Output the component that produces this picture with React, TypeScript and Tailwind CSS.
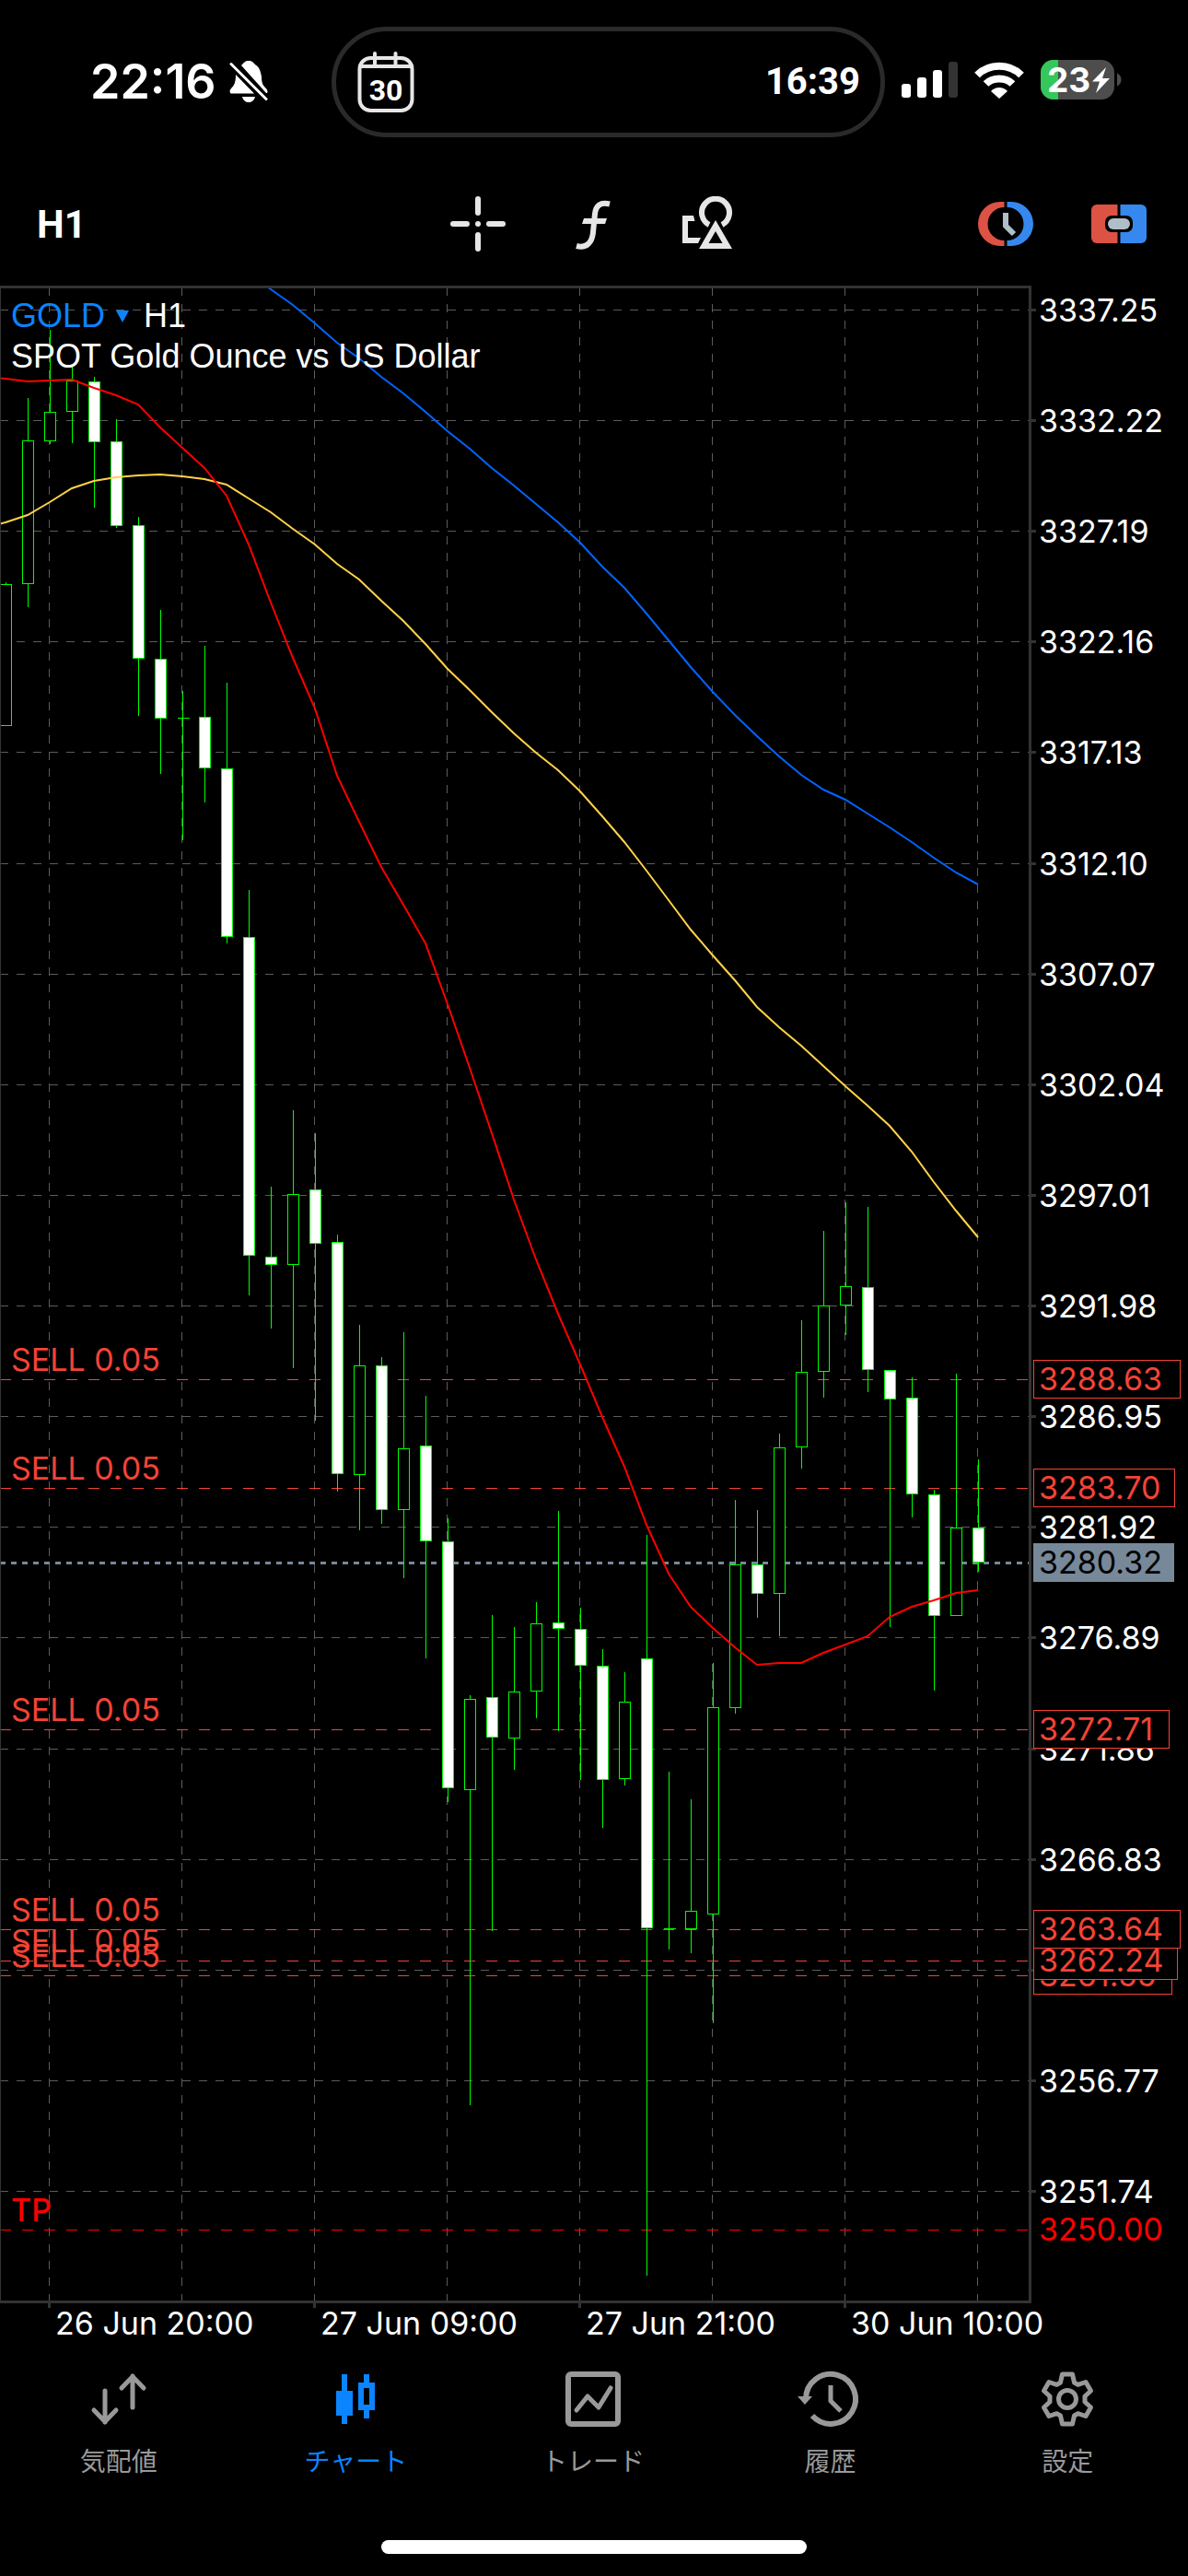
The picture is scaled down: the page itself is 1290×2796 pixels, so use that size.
import type { ReactNode } from "react";

type Candle = {
  high: number;
  top: number;
  bottom: number;
  low: number;
  down: boolean;
};

// high, body top, body bottom, low, falling (1) or rising (0)
const CANDLES: Candle[] = [
  [632, 634, 787, 787, 0],
  [432, 478, 633, 659, 0],
  [358, 447, 478, 482, 0],
  [396, 413, 446, 481, 0],
  [409, 414, 479, 551, 1],
  [455, 479, 570, 573, 1],
  [561, 570, 714, 777, 1],
  [662, 715, 779, 840, 1],
  [750, 779, 779, 912, 0],
  [701, 778, 833, 871, 1],
  [741, 834, 1016, 1024, 1],
  [966, 1017, 1362, 1406, 1],
  [1288, 1364, 1372, 1442, 1],
  [1205, 1296, 1372, 1485, 0],
  [1230, 1291, 1349, 1542, 1],
  [1340, 1348, 1599, 1619, 1],
  [1438, 1482, 1600, 1661, 0],
  [1473, 1482, 1638, 1654, 1],
  [1446, 1572, 1638, 1713, 0],
  [1515, 1569, 1672, 1800, 1],
  [1648, 1673, 1940, 1956, 1],
  [1840, 1844, 1942, 2285, 0],
  [1753, 1842, 1885, 2096, 1],
  [1766, 1836, 1886, 1921, 0],
  [1739, 1762, 1835, 1865, 0],
  [1640, 1761, 1767, 1879, 1],
  [1745, 1768, 1807, 1932, 1],
  [1790, 1808, 1931, 1984, 1],
  [1815, 1847, 1930, 1938, 0],
  [1666, 1800, 2092, 2470, 1],
  [1923, 2093, 2093, 2116, 0],
  [1953, 2074, 2093, 2120, 0],
  [1805, 1853, 2077, 2196, 0],
  [1628, 1698, 1853, 1860, 0],
  [1639, 1698, 1729, 1756, 1],
  [1556, 1571, 1729, 1776, 0],
  [1433, 1489, 1570, 1594, 0],
  [1336, 1417, 1488, 1517, 0],
  [1305, 1396, 1416, 1449, 0],
  [1310, 1397, 1486, 1511, 1],
  [1487, 1487, 1518, 1766, 1],
  [1495, 1517, 1621, 1647, 1],
  [1617, 1622, 1753, 1835, 1],
  [1491, 1658, 1753, 1753, 0],
  [1584, 1658, 1695, 1706, 1],
].map(([high, top, bottom, low, down]) => ({
  high,
  top,
  bottom,
  low,
  down: down === 1,
}));

// One value per candle, with one more before the first
const MA_FAST = [
  409, 411, 414, 413, 412, 421, 429, 439, 464, 486, 508, 538, 591, 654, 714,
  769, 842, 892, 941, 982, 1024, 1090, 1159, 1230, 1302, 1367, 1426, 1481,
  1538, 1592, 1655, 1708, 1744, 1767, 1788, 1807, 1805, 1805, 1794, 1785,
  1776, 1755, 1744, 1737, 1729, 1726,
];

const MA_MID = [
  573, 567, 559, 545, 530, 522, 518, 516, 515, 517, 520, 526, 541, 556, 574,
  591, 612, 629, 652, 674, 699, 726, 749, 773, 796, 817, 836, 859, 886, 914,
  945, 977, 1009, 1037, 1064, 1093, 1115, 1135, 1157, 1179, 1200, 1222, 1250,
  1283, 1314, 1343,
];

// Starts at candle 11, where it comes in from above the plot
const MA_SLOW = [
  297, 314, 331, 351, 372, 389, 409, 427, 447, 468, 487, 508, 527, 547, 567,
  589, 615, 638, 666, 695, 724, 751, 776, 799, 821, 841, 857, 868, 883, 898,
  914, 931, 947, 960,
];

const GRID_PRICES = [
  "3337.25",
  "3332.22",
  "3327.19",
  "3322.16",
  "3317.13",
  "3312.10",
  "3307.07",
  "3302.04",
  "3297.01",
  "3291.98",
  "3286.95",
  "3281.92",
  "3276.89",
  "3271.86",
  "3266.83",
  "3261.80",
  "3256.77",
  "3251.74",
];

const POSITIONS = [
  { price: "3261.55", y: 2144, width: 150 },
  { price: "3262.24", y: 2128, width: 156 },
  { price: "3263.64", y: 2094, width: 159 },
  { price: "3272.71", y: 1877, width: 147 },
  { price: "3283.70", y: 1615, width: 153 },
  { price: "3288.63", y: 1497, width: 159 },
];

const TIMES = [
  { x: 53, label: "26 Jun 20:00" },
  { x: 341, label: "27 Jun 09:00" },
  { x: 629, label: "27 Jun 21:00" },
  { x: 917, label: "30 Jun 10:00" },
];

const GRID_COLUMNS = [53, 197, 341, 485, 629, 773, 917, 1061];

const TOP = 313;
const BOTTOM = 2497;
const RIGHT = 1117;

const candleX = (i: number) => 6.5 + i * 24;
const gridY = (i: number) => Math.round(336 + i * 120.12) + 0.5;

function toPoints(values: number[], start: number) {
  return values.map((y, i) => `${candleX(i + start) - 0.5},${y}`).join(" ");
}

function Chart() {
  return (
    <svg
      viewBox="0 310 1290 2240"
      role="img"
      aria-label="GOLD H1"
      className="block w-full font-[Inter,'Liberation_Sans',sans-serif] text-[34px]"
    >
      <defs>
        <clipPath id="plot">
          <rect x="0" y={TOP} width={RIGHT} height={BOTTOM - TOP} />
        </clipPath>
      </defs>

      <g fill="#f44336">
        {POSITIONS.map((p) => (
          <text key={p.price} x="12" y={p.y - 9}>
            SELL 0.05
          </text>
        ))}
      </g>
      <text x="12" y="2411" fill="#ff0000" fontWeight="500">
        TP
      </text>

      <g stroke="#5c5c5c" strokeDasharray="9 9" shapeRendering="crispEdges">
        {GRID_PRICES.map((p, i) => (
          <line key={p} x1="0" y1={gridY(i)} x2={RIGHT} y2={gridY(i)} />
        ))}
        {GRID_COLUMNS.map((x) => (
          <line key={x} x1={x + 0.5} y1="312" x2={x + 0.5} y2={BOTTOM} />
        ))}
      </g>

      <g strokeDasharray="12 12" shapeRendering="crispEdges">
        {POSITIONS.map((p) => (
          <line
            key={p.price}
            x1="0"
            y1={p.y + 0.5}
            x2={RIGHT}
            y2={p.y + 0.5}
            stroke="#f44336"
          />
        ))}
        <line x1="0" y1="2420.5" x2={RIGHT} y2="2420.5" stroke="#ff0000" />
      </g>
      <line
        x1="0"
        y1="1696.5"
        x2={RIGHT}
        y2="1696.5"
        stroke="#778899"
        strokeWidth="3"
        strokeDasharray="6 6"
        shapeRendering="crispEdges"
      />

      <g stroke="#00ff00" shapeRendering="crispEdges">
        {CANDLES.map((c, i) => (
          <g key={i}>
            <line x1={candleX(i)} y1={c.high} x2={candleX(i)} y2={c.low} />
            {c.top === c.bottom ? (
              <line
                x1={candleX(i) - 6}
                y1={c.top + 0.5}
                x2={candleX(i) + 7}
                y2={c.top + 0.5}
              />
            ) : (
              <rect
                x={candleX(i) - 6}
                y={c.top + 0.5}
                width="12"
                height={c.bottom - c.top}
                fill={c.down ? "#ffffff" : "#000000"}
              />
            )}
          </g>
        ))}
      </g>

      <g fill="none" strokeWidth="2" clipPath="url(#plot)">
        <polyline points={toPoints(MA_SLOW, 11)} stroke="#0064ff" />
        <polyline points={toPoints(MA_MID, -1)} stroke="#ffd24a" />
        <polyline points={toPoints(MA_FAST, -1)} stroke="#ff0000" />
      </g>

      <g fill="#333333" shapeRendering="crispEdges">
        <rect x="0" y="310" width="1120" height="3" />
        <rect x="0" y="310" width="1" height="2190" />
        <rect x={RIGHT} y="310" width="3" height="2190" />
        <rect x="0" y={BOTTOM} width="1120" height="3" />
        {GRID_PRICES.map((p, i) => (
          <rect key={p} x="1120" y={gridY(i) - 1.5} width="5" height="3" />
        ))}
        {TIMES.map((t) => (
          <rect key={t.x} x={t.x - 1} y="2500" width="3" height="5" />
        ))}
      </g>

      <g fill="#ffffff">
        {GRID_PRICES.map((p, i) => (
          <text key={p} x="1128" y={gridY(i) + 12}>
            {p}
          </text>
        ))}
        {TIMES.map((t) => (
          <text key={t.x} x={t.x + 7} y="2534">
            {t.label}
          </text>
        ))}
      </g>

      {POSITIONS.map((p) => (
        <g key={p.price}>
          <rect
            x="1122.5"
            y={p.y - 20.5}
            width={p.width}
            height="41"
            fill="#000000"
            stroke="#f44336"
          />
          <text x="1128" y={p.y + 12} fill="#f44336">
            {p.price}
          </text>
        </g>
      ))}
      <rect x="1122" y="1675" width="153" height="42" fill="#778899" />
      <text x="1128" y="1708" fill="#000000">
        3280.32
      </text>
      <text x="1128" y="2432" fill="#ff0000">
        3250.00
      </text>
    </svg>
  );
}

function StatusBar() {
  return (
    <header className="grid h-[190px] grid-cols-[360px_1fr_329px] pt-[29px] text-white">
      <div className="flex h-[120px] items-center gap-[14px] pl-[98px]">
        <span className="text-[52px] font-semibold">22:16</span>
        <svg viewBox="0 0 42 46" className="h-[46px] w-[42px] shrink-0" fill="#fff">
          <path d="M13 5 C16 2 17 0 21 0 C25 0 26 2 28 4 C33 7 34 12 35 17 C35 25 37 27 40 30 C42 33 42 35 40 35Z" />
          <path d="M7 15 L27 35.500 H3 C0 35.500 0 32 2 30 C5 27 7 24 7 15Z" />
          <path d="M14 39 H28 C27 43 24 45 21 45 C18 45 15 43 14 39Z" />
          <path d="M2 3.500 L40 41.500" stroke="#000" strokeWidth="8" />
          <path d="M2 3.500 L40 41.500" stroke="#fff" strokeWidth="3" strokeLinecap="round" />
        </svg>
      </div>

      <div className="flex h-[120px] items-center justify-between rounded-full border-[5px] border-[#2a2a2a] pr-[22px] pl-[23px]">
        <svg viewBox="0 0 62 66" className="h-[66px] w-[62px]" fill="none" stroke="#e6e6e6">
          <rect x="2.500" y="7" width="57" height="57" rx="12" strokeWidth="4" />
          <path d="M3 16 H59" strokeWidth="4" />
          <path d="M19 2 V14 M41.500 2 V14" strokeWidth="4" strokeLinecap="round" />
          <text
            x="31"
            y="53"
            textAnchor="middle"
            fill="#fff"
            stroke="none"
            className="font-[Roboto,sans-serif] text-[32px] font-bold"
          >
            30
          </text>
        </svg>
        <span className="font-[Roboto,sans-serif] text-[40px] font-bold">16:39</span>
      </div>

      <div className="flex h-[115px] items-center gap-[18px] pl-[18px]">
        <svg viewBox="0 0 61 39" className="h-[39px] w-[61px]" fill="#fff">
          <rect x="0" y="24" width="10" height="15" rx="3" />
          <rect x="17" y="17" width="10" height="22" rx="3" />
          <rect x="34" y="9" width="10" height="30" rx="3" />
          <rect x="51" y="0" width="10" height="39" rx="3" fill="#333" />
        </svg>
        <svg viewBox="0 0 54 40" className="h-[40px] w-[54px]" fill="none" stroke="#fff">
          <path d="M3 14.500 C16 1.500 38 1.500 51 14.500" strokeWidth="8" />
          <path d="M12.500 24 C20 16.500 34 16.500 41.500 24" strokeWidth="8" />
          <path d="M18 32 C23 26.500 31 26.500 36 32 L27 40Z" fill="#fff" stroke="none" />
        </svg>
        <svg viewBox="0 0 90 43" className="h-[43px] w-[90px]">
          <defs>
            <clipPath id="battery">
              <rect x="0" y="0" width="80" height="43" rx="14" />
            </clipPath>
          </defs>
          <g clipPath="url(#battery)">
            <rect width="80" height="43" fill="#4d4d4d" />
            <rect width="19" height="43" fill="#34c759" />
          </g>
          <path d="M83 14.500 C89 17 89 26 83 28.500Z" fill="#4d4d4d" />
          <text x="7" y="35" fill="#fff" className="text-[37px] font-bold">
            23
          </text>
          <path d="M71 8 L56 23.500 H64 L60 36 L75 20 H67Z" fill="#fff" />
        </svg>
      </div>
    </header>
  );
}

function ToolButton({ label, children }: { label: string; children: ReactNode }) {
  return (
    <button type="button" aria-label={label} className="flex h-[60px] w-[60px] items-center justify-center">
      {children}
    </button>
  );
}

function Toolbar() {
  return (
    <div className="grid h-[120px] grid-cols-[1fr_auto_1fr] items-center pr-[42px] pb-[14px] pl-[40px]">
      <button
        type="button"
        className="justify-self-start font-[Roboto,sans-serif] text-[42px] font-bold text-white"
      >
        H1
      </button>
      <div className="flex gap-[65px]">
        <ToolButton label="Crosshair">
          <svg viewBox="0 0 60 60" className="size-[60px]" fill="#e6e6e6">
            <rect x="27" y="0" width="6" height="21" rx="3" />
            <rect x="27" y="39" width="6" height="21" rx="3" />
            <rect x="0" y="27" width="21" height="6" rx="3" />
            <rect x="39" y="27" width="21" height="6" rx="3" />
            <circle cx="30" cy="30" r="3" />
          </svg>
        </ToolButton>
        <ToolButton label="Indicators">
          <svg viewBox="0 0 60 60" className="size-[60px]" fill="none" stroke="#e6e6e6" strokeWidth="6">
            <path d="M48 8.500 C38 6 33 10 32 19 L30 39 C29 50 23 57 12 54" />
            <path d="M20 24 H45 L43 30 H18Z" fill="#e6e6e6" stroke="none" />
          </svg>
        </ToolButton>
        <ToolButton label="Objects">
          <svg viewBox="0 0 60 60" className="size-[60px]" fill="none" stroke="#e6e6e6" strokeWidth="6">
            <path d="M31 31 A15 15 0 1 1 45 31" />
            <path
              d="M38 26 L56 57 H20Z M38 38 L30.500 51 H45.500Z"
              fill="#e6e6e6"
              fillRule="evenodd"
              stroke="none"
            />
            <path d="M2 21 H14 L15.500 27 H8 V45 H22 L19 51 H2Z" fill="#e6e6e6" stroke="none" />
          </svg>
        </ToolButton>
      </div>
      <div className="flex gap-[63px] justify-self-end pr-[3px]">
        <ToolButton label="Trading hours">
          <svg viewBox="0 0 60 48" className="h-[48px] w-[60px]">
            <path d="M28.500 0 H24 A24 24 0 0 0 24 48 H28.500 V42 A18 18 0 0 1 28.500 6Z" fill="#dc5245" />
            <path d="M31.500 0 H36 A24 24 0 0 1 36 48 H31.500 V42 A18 18 0 0 0 31.500 6Z" fill="#3688ee" />
            <path d="M30 12 V26 L39 35" fill="none" stroke="#afbfc8" strokeWidth="6" />
          </svg>
        </ToolButton>
        <ToolButton label="One click trading">
          <svg viewBox="0 0 60 42" className="h-[42px] w-[60px]">
            <path d="M28.500 0 H6 A6 6 0 0 0 0 6 V36 A6 6 0 0 0 6 42 H28.500Z" fill="#dc5245" />
            <path d="M31.500 0 H54 A6 6 0 0 1 60 6 V36 A6 6 0 0 1 54 42 H31.500Z" fill="#3688ee" />
            <rect x="15" y="12" width="30" height="18" rx="7" fill="#000" />
            <rect x="18" y="15" width="24" height="12" rx="6" fill="#afbfc8" />
          </svg>
        </ToolButton>
      </div>
    </div>
  );
}

function Tab({ label, active, children }: { label: string; active?: boolean; children: ReactNode }) {
  return (
    <a
      href="#"
      aria-current={active ? "page" : undefined}
      className={`flex flex-col items-center gap-[18px] ${active ? "text-[#0a84ff]" : "text-[#999999]"}`}
    >
      <svg viewBox="0 0 60 60" className="size-[60px] overflow-visible" fill="none" stroke="currentColor" strokeWidth="6">
        {children}
      </svg>
      <span className="text-[28px] leading-[40px]">{label}</span>
    </a>
  );
}

function TabBar() {
  return (
    <nav className="grid grid-cols-5 pt-[24px] pr-[2px]">
      <Tab label="気配値">
        <path
          d="M15 21 V55 M3 42 L15 54.500 L27 42 M45 39 V5 M33 18 L45 5.500 L57 18"
          strokeWidth="5"
          strokeLinecap="round"
        />
      </Tab>
      <Tab label="チャート" active>
        <path d="M18 3 V57 M42 3 V15 M42 39 V51" />
        <rect x="9" y="21" width="18" height="27" fill="currentColor" stroke="none" />
        <rect x="36" y="15" width="12" height="24" />
      </Tab>
      <Tab label="トレード">
        <rect x="3" y="3" width="54" height="54" rx="3" />
        <path d="M12 42 L24 27 L36 39 L49 18" strokeWidth="5" strokeLinecap="round" strokeLinejoin="round" />
      </Tab>
      <Tab label="履歴">
        <path d="M3 30 A27 27 0 1 1 10 48" />
        <path d="M-6 27 H10 L2 36Z" fill="currentColor" stroke="none" />
        <path d="M30 15 V32 L41 43" strokeWidth="5" />
      </Tab>
      <Tab label="設定">
        <path
          d="M24.500 3 H35.500 L37.500 12 L41.500 14.300 L50 11.500 L55.500 21 L49 27 V33 L55.500 39 L50 48.500 L41.500 45.700 L37.500 48 L35.500 57 H24.500 L22.500 48 L18.500 45.700 L10 48.500 L4.500 39 L11 33 V27 L4.500 21 L10 11.500 L18.500 14.300 L22.500 12Z"
          strokeWidth="5"
          strokeLinejoin="round"
        />
        <circle cx="30" cy="30" r="9.500" strokeWidth="5" />
      </Tab>
    </nav>
  );
}

export default function App() {
  return (
    <div className="flex min-h-screen flex-col bg-black font-[Inter,'Liberation_Sans','Noto_Sans_CJK_JP',sans-serif]">
      <StatusBar />
      <Toolbar />
      <main className="relative">
        <Chart />
        <div className="absolute top-[11px] left-[12px] font-['Liberation_Sans',sans-serif] text-[36px] leading-[44px] text-white">
          <div className="flex items-center">
            <button type="button" className="flex items-center gap-[12px] text-[#0a84ff]">
              GOLD
              <svg viewBox="0 0 14 14" className="size-[14px]" fill="currentColor">
                <path d="M0 1 H14 L7 14Z" />
              </svg>
            </button>
            <span className="pl-[16px]">H1</span>
          </div>
          <div>SPOT Gold Ounce vs US Dollar</div>
        </div>
      </main>
      <TabBar />
      <div className="mx-auto mt-auto mb-[24px] h-[15px] w-[462px] rounded-full bg-white" />
    </div>
  );
}
